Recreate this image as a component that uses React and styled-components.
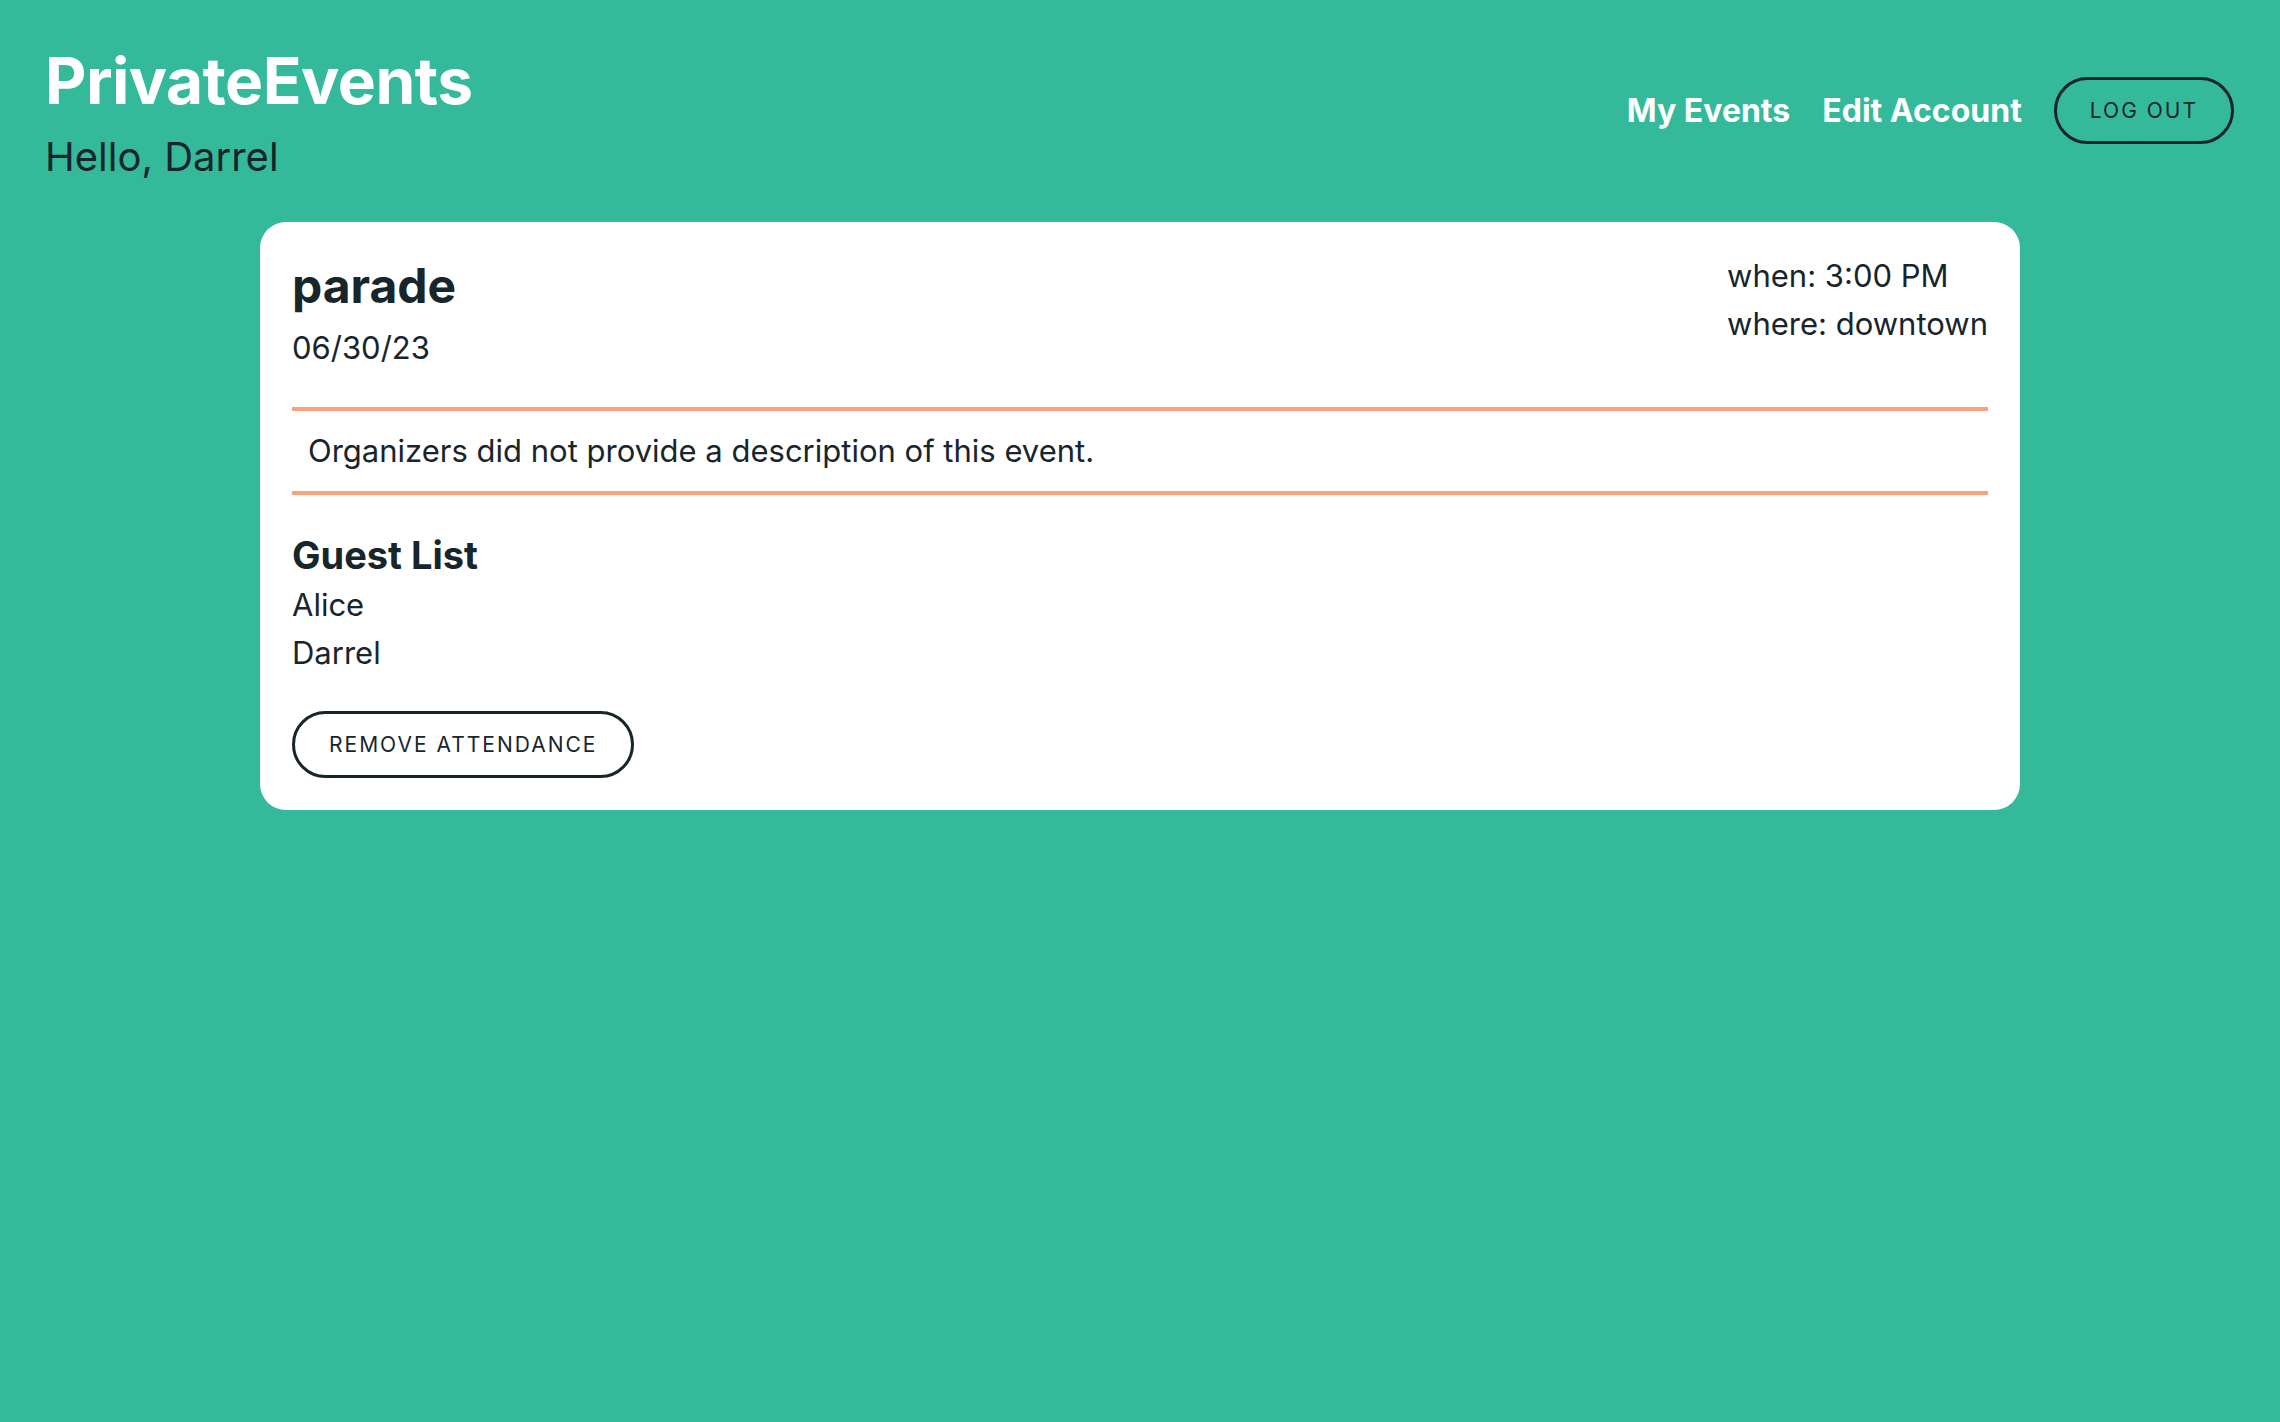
import React from 'react';
import styled, { createGlobalStyle } from 'styled-components';

const colors = {
  green: '#34ba9b',
  ink: '#18252b',
  salmon: '#ffa17a',
  white: '#ffffff',
};

const GlobalStyle = createGlobalStyle`
  html, body {
    margin: 0;
    padding: 0;
    background: ${colors.green};
    font-family: Inter, "Noto Sans", sans-serif;
    color: ${colors.ink};
  }
  body {
    min-height: 1422px;
  }
`;

const Page = styled.div`
  min-height: 1422px;
  background: ${colors.green};
`;

const Header = styled.header`
  display: flex;
  justify-content: space-between;
  align-items: center;
  padding: 46px 46px 0 45px;
`;

const Brand = styled.div`
  display: flex;
  flex-direction: column;
`;

const Title = styled.h1`
  margin: 0;
  font-size: 64px;
  line-height: 1.1;
  font-weight: 700;
  color: ${colors.white};
  letter-spacing: -0.5px;
`;

const Greeting = styled.p`
  margin: 17px 0 0;
  font-size: 40px;
  line-height: 1.2;
  font-weight: 400;
`;

const Nav = styled.nav`
  display: flex;
  align-items: center;
  gap: 32px;
  margin-top: -6px;
`;

const NavLink = styled.a`
  font-size: 32px;
  font-weight: 700;
  color: ${colors.white};
  text-decoration: none;
  cursor: pointer;
`;

const PillButton = styled.button`
  background: transparent;
  border: 3px solid ${colors.ink};
  border-radius: 40px;
  color: ${colors.ink};
  font-family: inherit;
  font-size: 21px;
  letter-spacing: 2px;
  text-transform: uppercase;
  height: 67px;
  padding: 0 ${props => (props.wide ? '34px' : '33px')};
  cursor: pointer;
`;

const Main = styled.main`
  padding-top: 41px;
`;

const Card = styled.section`
  width: 1760px;
  margin: 0 auto;
  box-sizing: border-box;
  background: ${colors.white};
  border-radius: 26px;
  padding: 32px;
  font-size: 31px;
  line-height: 48px;
`;

const CardTop = styled.div`
  display: flex;
  justify-content: space-between;
  align-items: flex-start;
  padding-bottom: 35px;
`;

const EventName = styled.h2`
  margin: 0;
  font-size: 48px;
  line-height: 64px;
  font-weight: 700;
`;

const EventDate = styled.div`
  margin-top: 6px;
`;

const Meta = styled.div`
  display: flex;
  flex-direction: column;
  margin-top: -2px;
`;

const Description = styled.p`
  margin: 0;
  border-top: 4px solid ${colors.salmon};
  border-bottom: 4px solid ${colors.salmon};
  padding: 16px;
  line-height: 48px;
`;

const GuestHeading = styled.h3`
  margin: 34px 0 0;
  font-size: 38px;
  line-height: 52px;
  font-weight: 700;
`;

const GuestList = styled.ul`
  list-style: none;
  margin: 0 0 34px;
  padding: 0;
`;

const Guest = styled.li`
  line-height: 48px;
`;

export default function App() {
  const guests = ['Alice', 'Darrel'];
  return (
    <Page>
      <GlobalStyle />
      <Header>
        <Brand>
          <Title>PrivateEvents</Title>
          <Greeting>Hello, Darrel</Greeting>
        </Brand>
        <Nav>
          <NavLink>My Events</NavLink>
          <NavLink>Edit Account</NavLink>
          <PillButton>Log Out</PillButton>
        </Nav>
      </Header>
      <Main>
        <Card>
          <CardTop>
            <div>
              <EventName>parade</EventName>
              <EventDate>06/30/23</EventDate>
            </div>
            <Meta>
              <span>when: 3:00 PM</span>
              <span>where: downtown</span>
            </Meta>
          </CardTop>
          <Description>Organizers did not provide a description of this event.</Description>
          <GuestHeading>Guest List</GuestHeading>
          <GuestList>
            {guests.map(g => (
              <Guest key={g}>{g}</Guest>
            ))}
          </GuestList>
          <PillButton wide>Remove Attendance</PillButton>
        </Card>
      </Main>
    </Page>
  );
}
